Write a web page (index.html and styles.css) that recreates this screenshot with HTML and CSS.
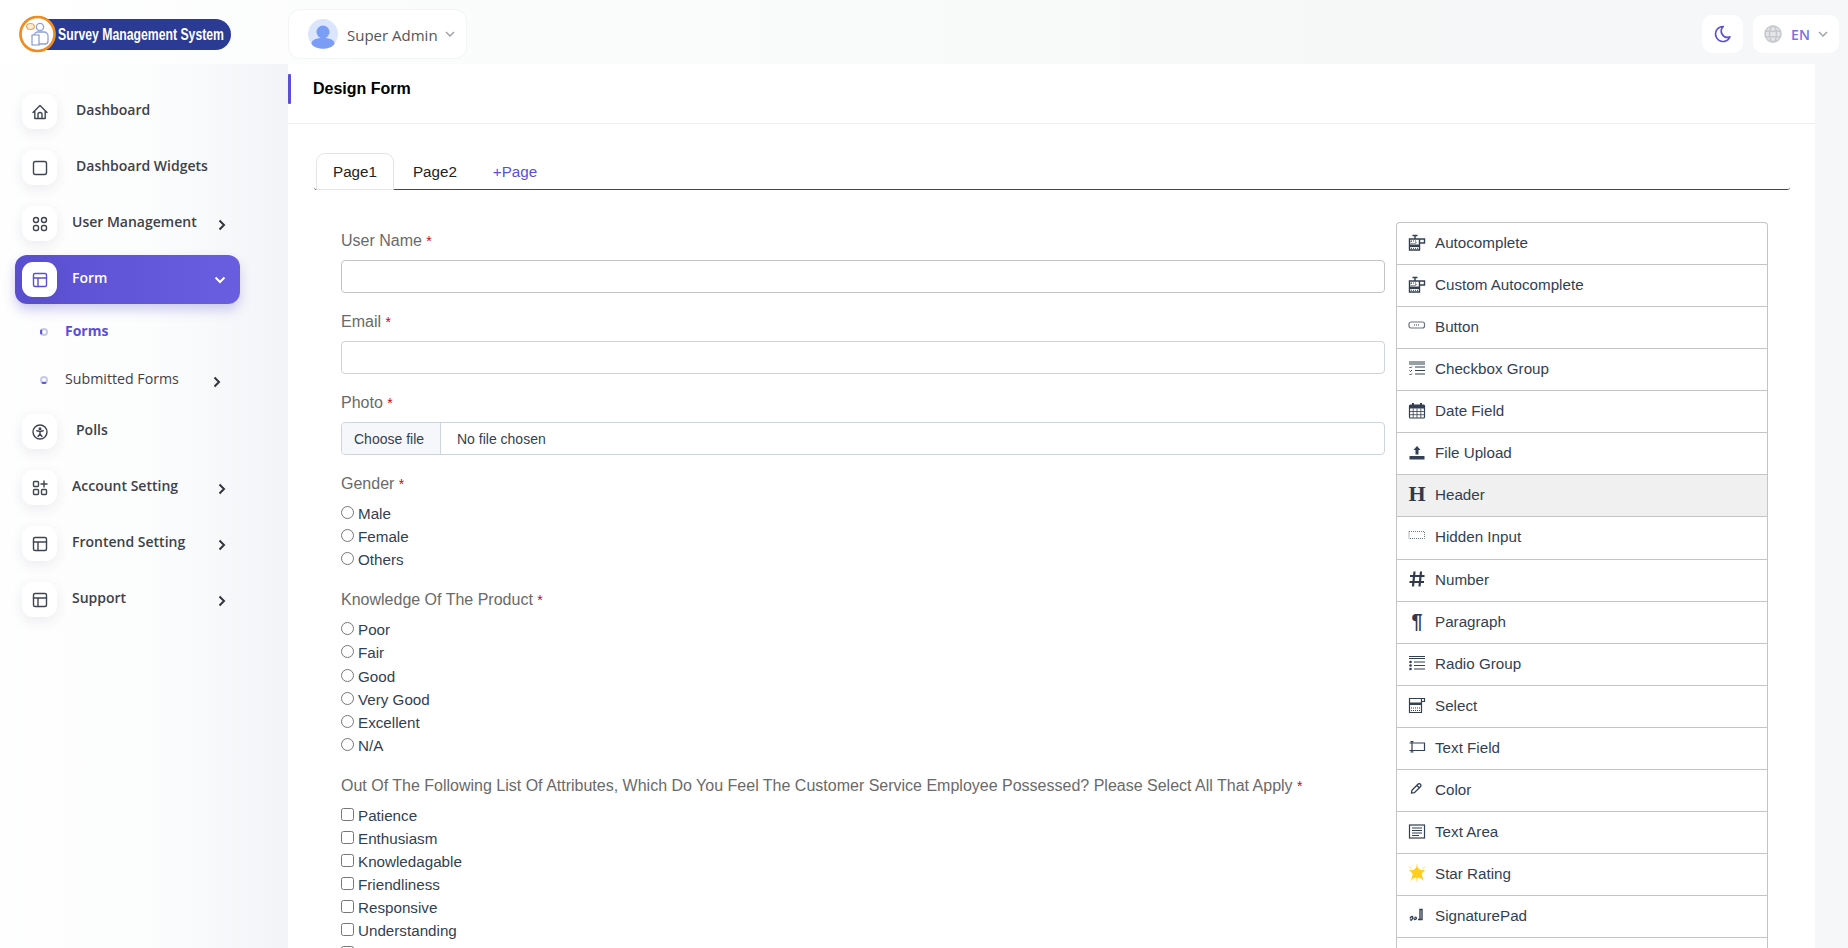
FILE: index.html
```html
<!DOCTYPE html>
<html lang="en">
<head>
    <meta charset="UTF-8">
    <title>Design Form - Survey Management System</title>
    <link rel="stylesheet" href="styles.css">
</head>
<body>

    <!-- Top Bar -->
    <header class="top-bar">
        <div class="logo">
            <svg width="288" height="64" viewBox="0 0 288 64">
                <rect x="30" y="19" width="201" height="31" rx="15.5" fill="#2b3a92"/>
                <circle cx="37.5" cy="34" r="18" fill="#9a9aa5"/>
                <circle cx="37.5" cy="34" r="17" fill="#fff" stroke="#f28c1e" stroke-width="2.6"/>
                <circle cx="40" cy="27" r="3.6" fill="#fff" stroke="#8fa0d8" stroke-width="1.3"/>
                <path d="M34 44V36a4 4 0 0 1 4-4h6a4 4 0 0 1 4 4v5a3 3 0 0 1-3 3z" fill="#fff" stroke="#8fa0d8" stroke-width="1.3"/>
                <path d="M32 35h7v10h-7z" fill="#fff" stroke="#7f8fc8" stroke-width="1.1"/>
                <ellipse cx="30.5" cy="26.5" rx="3.8" ry="3" fill="#fdeed8" stroke="#f2a24a" stroke-width="1.2"/>
                <text x="58" y="39.5" font-family="Liberation Sans Narrow, Liberation Sans" font-weight="700" font-size="17" fill="#fff" textLength="166" lengthAdjust="spacingAndGlyphs">Survey Management System</text>
            </svg>
        </div>
        <div class="user-menu">
            <svg class="avatar" width="30" height="30" viewBox="0 0 30 30">
                <circle cx="15" cy="15" r="15" fill="#dbe5fb"/>
                <circle cx="15" cy="13" r="6.5" fill="#7b9df5"/>
                <ellipse cx="15" cy="24.2" rx="11.500" ry="5.500" fill="#7b9df5"/>
            </svg>
            <span class="user-name">Super Admin</span>
            <svg class="caret" width="10" height="6" viewBox="0 0 10 6"><path d="M1 1l4 4 4-4" fill="none" stroke="#9a9da5" stroke-width="1.3"/></svg>
        </div>
        <div class="top-right">
            <div class="top-btn moon-btn">
                <svg width="20" height="20" viewBox="0 0 24 24"><path d="M12 3c.132 0 .263 0 .393 0a7.500 7.500 0 0 0 7.920 12.446a9 9 0 1 1-8.313-12.454z" fill="none" stroke="#5b4fd6" stroke-width="2" stroke-linejoin="round"/></svg>
            </div>
            <div class="top-btn lang-btn">
                <svg width="18" height="18" viewBox="0 0 18 18" fill="none" stroke="#c6c8cc" stroke-width="1.500">
                    <circle cx="9" cy="9" r="8" fill="#e4e5e8"/>
                    <ellipse cx="9" cy="9" rx="3.500" ry="8"/>
                    <path d="M1.500 6.300h15M1.500 11.700h15"/>
                </svg>
                <span class="lang-code">EN</span>
                <svg class="caret" width="10" height="6" viewBox="0 0 10 6"><path d="M1 1l4 4 4-4" fill="none" stroke="#9a9da5" stroke-width="1.300"/></svg>
            </div>
        </div>
    </header>

    <div class="layout">

        <!-- Sidebar -->
        <aside class="sidebar">
            <nav class="nav">
                <a class="nav-item plain">
                    <span class="nav-icon"><svg width="18" height="18" viewBox="0 0 18 18" class="ico"><path d="M2 9.500L9 2.500l7 7M3.800 8v7.500h10.400V8M7 15.500v-4a2 2 0 0 1 4 0v4"/></svg></span>
                    <span class="nav-label">Dashboard</span>
                </a>
                <a class="nav-item plain">
                    <span class="nav-icon"><svg width="18" height="18" viewBox="0 0 18 18" class="ico"><rect x="2.500" y="2.500" width="13" height="13" rx="2"/></svg></span>
                    <span class="nav-label">Dashboard Widgets</span>
                </a>
                <a class="nav-item">
                    <span class="nav-icon"><svg width="18" height="18" viewBox="0 0 18 18" class="ico"><rect x="2.500" y="2.500" width="5" height="5" rx="2.500"/><rect x="10.500" y="2.500" width="5" height="5" rx="2.500"/><rect x="2.500" y="10.500" width="5" height="5" rx="2"/><rect x="10.500" y="10.500" width="5" height="5" rx="2"/></svg></span>
                    <span class="nav-label">User Management</span>
                    <svg class="chev" width="8" height="12" viewBox="0 0 8 12"><path d="M1.500 1.500L6 6l-4.500 4.500"/></svg>
                </a>
                <a class="nav-item active">
                    <span class="nav-icon"><svg width="18" height="18" viewBox="0 0 18 18" class="ico"><rect x="2.500" y="2.500" width="13" height="13" rx="1.500"/><path d="M2.500 7h13M7 7v8.500"/></svg></span>
                    <span class="nav-label">Form</span>
                    <svg class="chev-down" width="12" height="8" viewBox="0 0 12 8"><path d="M1.500 1.500L6 6l4.500-4.500"/></svg>
                </a>
                <div class="sub-nav">
                    <a class="sub-item current"><span class="bullet"></span><span>Forms</span></a>
                    <a class="sub-item"><span class="bullet bullet-b"></span><span>Submitted Forms</span>
                        <svg class="chev" width="8" height="12" viewBox="0 0 8 12"><path d="M1.500 1.500L6 6l-4.500 4.500"/></svg>
                    </a>
                </div>
                <a class="nav-item plain">
                    <span class="nav-icon"><svg width="18" height="18" viewBox="0 0 18 18" class="ico"><circle cx="9" cy="9" r="7"/><circle cx="9" cy="5.800" r=".8"/><path d="M5.800 7.700L9 8.500l3.200-.8M9 8.500v2.300M9 10.800l-2 2.700M9 10.800l2 2.700"/></svg></span>
                    <span class="nav-label">Polls</span>
                </a>
                <a class="nav-item">
                    <span class="nav-icon"><svg width="18" height="18" viewBox="0 0 18 18" class="ico"><rect x="2.500" y="2.500" width="5" height="5" rx="1"/><rect x="2.500" y="10.500" width="5" height="5" rx="1"/><rect x="10.500" y="10.500" width="5" height="5" rx="1"/><path d="M13 2v6M10 5h6"/></svg></span>
                    <span class="nav-label">Account Setting</span>
                    <svg class="chev" width="8" height="12" viewBox="0 0 8 12"><path d="M1.500 1.500L6 6l-4.500 4.500"/></svg>
                </a>
                <a class="nav-item">
                    <span class="nav-icon"><svg width="18" height="18" viewBox="0 0 18 18" class="ico"><rect x="2.500" y="2.500" width="13" height="13" rx="1.500"/><path d="M2.500 7h13M7 7v8.500"/></svg></span>
                    <span class="nav-label">Frontend Setting</span>
                    <svg class="chev" width="8" height="12" viewBox="0 0 8 12"><path d="M1.500 1.500L6 6l-4.500 4.500"/></svg>
                </a>
                <a class="nav-item">
                    <span class="nav-icon"><svg width="18" height="18" viewBox="0 0 18 18" class="ico"><rect x="2.500" y="2.500" width="13" height="13" rx="1.500"/><path d="M2.500 7h13M7 7v8.500"/></svg></span>
                    <span class="nav-label">Support</span>
                    <svg class="chev" width="8" height="12" viewBox="0 0 8 12"><path d="M1.500 1.500L6 6l-4.500 4.500"/></svg>
                </a>
            </nav>
        </aside>

        <!-- Main Card -->
        <main class="card">
            <div class="card-head">
                <span class="accent"></span>
                <h1 class="card-title">Design Form</h1>
            </div>
            <div class="card-body">
                <div class="tabs">
                    <a class="tab selected">Page1</a>
                    <a class="tab">Page2</a>
                    <a class="tab add">+Page</a>
                </div>

                <div class="builder">
                    <!-- Preview -->
                    <form class="preview">
                        <div class="field">
                            <label class="field-label">User Name <span class="req">*</span></label>
                            <input class="text-input first" type="text">
                        </div>
                        <div class="field">
                            <label class="field-label">Email <span class="req">*</span></label>
                            <input class="text-input" type="text">
                        </div>
                        <div class="field">
                            <label class="field-label">Photo <span class="req">*</span></label>
                            <label class="file-input"><span class="file-btn">Choose file</span><span>No file chosen</span></label>
                        </div>
                        <div class="field options">
                            <label class="field-label">Gender <span class="req">*</span></label>
                            <label class="option"><input type="radio" name="gender">Male</label>
                            <label class="option"><input type="radio" name="gender">Female</label>
                            <label class="option"><input type="radio" name="gender">Others</label>
                        </div>
                        <div class="field options">
                            <label class="field-label">Knowledge Of The Product <span class="req">*</span></label>
                            <label class="option"><input type="radio" name="know">Poor</label>
                            <label class="option"><input type="radio" name="know">Fair</label>
                            <label class="option"><input type="radio" name="know">Good</label>
                            <label class="option"><input type="radio" name="know">Very Good</label>
                            <label class="option"><input type="radio" name="know">Excellent</label>
                            <label class="option"><input type="radio" name="know">N/A</label>
                        </div>
                        <div class="field options">
                            <label class="field-label">Out Of The Following List Of Attributes, Which Do You Feel The Customer Service Employee Possessed? Please Select All That Apply <span class="req">*</span></label>
                            <label class="option"><input type="checkbox">Patience</label>
                            <label class="option"><input type="checkbox">Enthusiasm</label>
                            <label class="option"><input type="checkbox">Knowledagable</label>
                            <label class="option"><input type="checkbox">Friendliness</label>
                            <label class="option"><input type="checkbox">Responsive</label>
                            <label class="option"><input type="checkbox">Understanding</label>
                            <label class="option"><input type="checkbox"></label>
                        </div>
                    </form>

                    <!-- Field Palette -->
                    <ul class="palette">
                        <li><svg class="pal-ico" width="18" height="18" viewBox="0 0 18 18"><path d="M1.500 6h10v11h-10zM11.500 6h5v4h-5M7 2v4M4.500 2.500h5" fill="none" stroke-width="1.400"/><path d="M2 11.500h9v2.500H2z" class="fill"/><path d="M3 8h5v2.500H3zM3 15.300h7" class="dots"/></svg>Autocomplete</li>
                        <li><svg class="pal-ico" width="18" height="18" viewBox="0 0 18 18"><path d="M1.500 6h10v11h-10zM11.500 6h5v4h-5M7 2v4M4.500 2.500h5" fill="none" stroke-width="1.400"/><path d="M2 11.500h9v2.500H2z" class="fill"/><path d="M3 8h5v2.500H3zM3 15.300h7" class="dots"/></svg>Custom Autocomplete</li>
                        <li><svg class="pal-ico" width="18" height="18" viewBox="0 0 18 18"><rect x="1" y="5" width="15.500" height="6" rx="2" fill="none" stroke="#6b7280" stroke-width="1.200"/><path d="M6 8h5" class="dots"/></svg>Button</li>
                        <li><svg class="pal-ico" width="18" height="18" viewBox="0 0 18 18"><path d="M1 3h16M1 5h16M7 8h10M7 11.500h10M7 15h10" fill="none"/><path d="M1.500 8l1 1 1.500-1.500M1.500 11.500l1 1 1.500-1.500M1.500 15l1 1 1.500-1.500" fill="none"/></svg>Checkbox Group</li>
                        <li><svg class="pal-ico" width="18" height="18" viewBox="0 0 18 18"><rect x="1.500" y="4" width="15" height="13" rx="1" fill="none" stroke-width="1.200"/><path d="M1.500 4h15v3.500h-15z" class="fill"/><path d="M5 2v3M13 2v3" stroke-width="2"/><path d="M1.500 10.500h15M1.500 13.700h15M5.200 7.500V17M9 7.500V17M12.800 7.500V17" fill="none" stroke-width=".8"/></svg>Date Field</li>
                        <li><svg class="pal-ico" width="18" height="18" viewBox="0 0 18 18"><path d="M9 3l3.500 4h-2v4.500h-3V7h-2z" class="fill"/><path d="M1.500 13h15v3.500h-15z" class="fill"/></svg>File Upload</li>
                        <li class="hovered"><span class="glyph glyph-h">H</span>Header</li>
                        <li class="tall"><svg class="pal-ico" width="18" height="18" viewBox="0 0 18 18"><rect x="1" y="5.500" width="15.500" height="7" fill="none" stroke="#6b7280" stroke-width="1" stroke-dasharray="1 1"/></svg>Hidden Input</li>
                        <li><svg class="pal-ico hash" width="18" height="18" viewBox="0 0 18 18"><path d="M6.500 1.500L5 16.500M13 1.500L11.500 16.500M2 6h14.500M1.500 12h14.500" fill="none" stroke-width="2.200"/></svg>Number</li>
                        <li><span class="glyph glyph-par">¶</span>Paragraph</li>
                        <li><svg class="pal-ico" width="18" height="18" viewBox="0 0 18 18"><path d="M1 2.500h16M1 4.500h16M6 8h11M6 11.500h11M6 15h11" fill="none"/><circle cx="2.500" cy="8" r="1.300" class="fill"/><circle cx="2.500" cy="11.500" r="1.300" class="fill"/><circle cx="2.500" cy="15" r="1.300" class="fill"/></svg>Radio Group</li>
                        <li><svg class="pal-ico" width="18" height="18" viewBox="0 0 18 18"><path d="M1.500 2.500h12v14h-12zM13.500 2.500h3v3h-3" fill="none" stroke-width="1.200"/><path d="M1.500 6.500h12v2.500h-12z" class="fill"/><path d="M3 12h9M3 14.500h9" class="dots"/></svg>Select</li>
                        <li><svg class="pal-ico" width="18" height="18" viewBox="0 0 18 18"><path d="M4 5h12.500v7.500H4M1.500 5h2.500v7.500h-2.500M2.500 3.500h3M2.500 14h3M4 3.500V14" fill="none" stroke-width="1.200"/></svg>Text Field</li>
                        <li><svg class="pal-ico" width="18" height="18" viewBox="0 0 18 18"><path d="M3.500 13l.4-2.800 6-6a1.700 1.700 0 0 1 2.500 2.500l-6 6zM9 5.500l2.500 2.500" fill="none" stroke-width="1.300"/></svg>Color</li>
                        <li><svg class="pal-ico" width="18" height="18" viewBox="0 0 18 18"><rect x="1.500" y="3" width="15" height="13" fill="none" stroke-width="1.200"/><path d="M4 6h10M4 8.500h10M4 11h10M4 13.500h7" fill="none"/></svg>Text Area</li>
                        <li><svg width="18" height="18" viewBox="0 0 18 18" class="star-ico"><path d="M9 2l2.600 4.300 5.400-.3-3.500 4 1.900 5.200L9.500 13.500 9 16l-1-2.500-4.900 1.700L5 10 1 6l5.400.3z" fill="#ffcd1c"/><circle cx="9" cy="9" r="4.600" fill="#ffcd1c"/><path d="M9 0v3M1 2.500l2.500 2.500M17 2.500L14.500 5M9 15v3M2.500 16.500l2-2M15.500 16.500l-2-2" stroke="#ffdb5c" stroke-width=".9"/></svg>Star Rating</li>
                        <li><svg class="pal-ico" width="18" height="18" viewBox="0 0 18 18"><path d="M2 12.500c1-3 3.500-2.500 2.500 0s-2 1.800-2 .8M6.500 11.500c1.500-1 2.500.5 1.500 1.500s-2.500.3-1.500-.8M10 13.500h4.500M12 3.500h2v10h-2z" fill="none" stroke-width="1.400"/></svg>SignaturePad</li>
                        <li></li>
                    </ul>
                </div>
            </div>
        </main>
    </div>

</body>
</html>
```
FILE: styles.css
```css
/* Global Styles */
html, body {
    height: 100%;
}

body {
    margin: 0;
    overflow: hidden;
    font-family: 'Liberation Sans', Arial, sans-serif;
    background: linear-gradient(90deg, #ffffff 0%, #fbfcfc 20%, #f6f8f8 75%, #f5f7f8 100%);
    color: #333f52;
}

a {
    text-decoration: none;
    color: inherit;
}

/* Top Bar */
.top-bar {
    display: flex;
    align-items: center;
    height: 64px;
}

.logo {
    width: 288px;
    height: 64px;
    flex-shrink: 0;
}

.logo svg {
    display: block;
}

.user-menu {
    display: flex;
    align-items: center;
    box-sizing: border-box;
    width: 179px;
    height: 50px;
    margin-top: 4px;
    padding-left: 19px;
    background: #fff;
    border: 1px solid #f3f4f6;
    border-radius: 12px;
}

.user-name {
    margin-left: 9px;
    margin-top: 1px;
    font-family: 'Open Sans', sans-serif;
    font-size: 15px;
    color: #555;
}

.user-menu .caret {
    margin-left: 7px;
}

.top-right {
    display: flex;
    gap: 10px;
    margin-left: auto;
    margin-right: 9px;
    margin-top: 4px;
}

.top-btn {
    display: flex;
    align-items: center;
    justify-content: center;
    height: 38px;
    background: #fff;
    border-radius: 10px;
}

.moon-btn {
    width: 41px;
}

.lang-btn {
    width: 86px;
}

.lang-code {
    margin: 0 8px 0 9px;
    font-family: 'Open Sans', sans-serif;
    font-size: 14px;
    font-weight: 600;
    color: #7c72e0;
}

/* Layout */
.layout {
    display: flex;
    height: calc(100% - 64px);
}

/* Sidebar */
.sidebar {
    width: 288px;
    flex-shrink: 0;
    box-sizing: border-box;
    padding: 30px 0 0 22px;
    background: linear-gradient(90deg, #fefefe 0%, #fcfdfd 50%, #f3f4f8 100%);
    font-family: 'Open Sans', sans-serif;
    font-size: 14px;
    font-weight: 600;
    color: #3f4149;
}

.nav {
    display: flex;
    flex-direction: column;
    gap: 21px;
}

.nav-item {
    display: flex;
    align-items: center;
    box-sizing: border-box;
    width: 218px;
    padding-right: 14px;
}

.nav-icon {
    display: flex;
    align-items: center;
    justify-content: center;
    width: 35px;
    height: 35px;
    flex-shrink: 0;
    background: #fff;
    border-radius: 11px;
    box-shadow: 0 4px 14px rgba(60, 60, 90, 0.09);
}

.ico {
    fill: none;
    stroke: #3f4452;
    stroke-width: 1.4;
    stroke-linecap: round;
    stroke-linejoin: round;
}

.nav-label {
    margin-left: 15px;
    margin-bottom: 5px;
}

.plain .nav-label {
    margin-left: 19px;
}

.chev, .chev-down {
    margin-left: auto;
    fill: none;
    stroke: #33353c;
    stroke-width: 2;
}

.nav-item .chev {
    margin-top: 3px;
}

.nav-item.active {
    width: 225px;
    margin: -7px 0 -7px -7px;
    padding: 7px 14px 7px 7px;
    border-radius: 12px;
    background: linear-gradient(90deg, #5a4fd0, #6a5ee0);
    box-shadow: 0 6px 12px rgba(90, 80, 210, 0.28);
    color: #fff;
}

.active .ico {
    stroke: #5a4fd6;
}

.active .chev-down {
    stroke: #fff;
    margin-top: 1px;
}

.sub-nav {
    display: flex;
    flex-direction: column;
    margin: -10px 0 -11px 18px;
}

.sub-item {
    display: flex;
    align-items: center;
    width: 181px;
    height: 48px;
    font-size: 14.2px;
    font-weight: 500;
}

.sub-item .chev {
    margin-top: 3px;
}

.sub-item.current {
    color: #5b4fd6;
    font-size: 14px;
    font-weight: 700;
}

.sub-item > span:nth-child(2) {
    margin-bottom: 3px;
}

.bullet {
    box-sizing: border-box;
    width: 8px;
    height: 8px;
    margin-right: 17px;
    border: 2px solid #c6cae6;
    border-left-color: #5b4fd6;
    border-radius: 50%;
}

.bullet-b {
    border-left-color: #c6cae6;
    border-bottom-color: #5b4fd6;
}

/* Main Card */
.card {
    flex: 1;
    margin-right: 33px;
    background: #fff;
    min-width: 0;
}

.card-head {
    display: flex;
    box-sizing: border-box;
    height: 60px;
    padding-top: 10px;
    border-bottom: 1px solid #eeeff1;
}

.accent {
    width: 3px;
    height: 30px;
    background: #5b4fd6;
    border-radius: 1px;
}

.card-title {
    margin: 0 0 0 22px;
    font-size: 16px;
    line-height: 30px;
    font-weight: 700;
    color: #000;
}

.card-body {
    padding: 29px 25px 0 26px;
}

/* Tabs */
.tabs {
    display: flex;
    box-sizing: border-box;
    height: 37px;
    padding-left: 2px;
    border-bottom: 1px solid #44464f;
    border-radius: 0 0 3px 3px;
    font-size: 15.2px;
}

.tab {
    box-sizing: border-box;
    height: 37px;
    padding: 0 16px;
    margin-right: 2px;
    line-height: 35px;
    color: #222;
    border: 1px solid transparent;
}

.tab.selected {
    background: #fff;
    border-color: #e4e5e8;
    border-radius: 9px 9px 0 0;
}

.tab.add {
    color: #5b4fd6;
}

/* Form Builder */
.builder {
    display: flex;
    gap: 11px;
    margin-top: 32px;
    padding-left: 27px;
}

.preview {
    width: 1044px;
    flex-shrink: 0;
}

.field {
    margin-bottom: 20px;
}

.field-label {
    display: block;
    height: 18px;
    margin: 10px 0 10px;
    font-size: 16px;
    line-height: 18px;
    color: #6a6a6a;
}

.options .field-label {
    margin-bottom: 9px;
}

.req {
    font-size: 14px;
    color: #d0021b;
}

.text-input {
    display: block;
    box-sizing: border-box;
    width: 100%;
    height: 33px;
    padding: 0 12px;
    background: #fff;
    border: 1px solid #ced4da;
    border-radius: 4px;
}

.text-input.first {
    border-color: #c4c4c4;
}

.file-input {
    display: flex;
    align-items: center;
    box-sizing: border-box;
    width: 100%;
    height: 33px;
    background: #fff;
    border: 1px solid #ced4da;
    border-radius: 4px;
    overflow: hidden;
    font-size: 14px;
    color: #333f52;
}

.file-btn {
    display: flex;
    align-items: center;
    box-sizing: border-box;
    width: 99px;
    height: 100%;
    margin-right: 16px;
    padding-left: 12px;
    background: #f5f7fb;
    border-right: 1px solid #ced4da;
}

.option {
    display: flex;
    align-items: center;
    height: 23.1px;
    font-size: 15.2px;
    color: #333f52;
}

.option input {
    width: 13px;
    height: 13px;
    margin: 0 4px 2px 0;
}

/* Field Palette */
.palette {
    list-style: none;
    box-sizing: border-box;
    width: 372px;
    margin: 0;
    padding: 0;
    flex-shrink: 0;
    font-size: 15.2px;
    color: #333f52;
    border: 1px solid #c4c4c4;
    border-bottom: 0;
    border-radius: 4px 4px 0 0;
}

.palette li {
    display: flex;
    align-items: center;
    box-sizing: border-box;
    height: 42px;
    padding: 0 0 2px 11px;
    border-bottom: 1px solid #c4c4c4;
}

.palette li.tall {
    height: 43px;
    padding-bottom: 4px;
}

.palette li.hovered {
    background: #f0f0f0;
}

.pal-ico, .star-ico {
    flex-shrink: 0;
    margin-right: 9px;
    margin-bottom: 2px;
}

.pal-ico {
    fill: #333f52;
    stroke: #333f52;
    stroke-width: 1;
}

.pal-ico.hash {
    stroke: #2f3a4c;
}

.pal-ico .fill {
    fill: #333f52;
    stroke: none;
}

.pal-ico .dots {
    fill: none;
    stroke-width: 1;
    stroke-dasharray: 1 1;
}

.glyph {
    width: 18px;
    margin-right: 9px;
    margin-bottom: 1px;
    text-align: center;
    color: #2f3a4c;
}

.glyph-h {
    font-family: 'Liberation Serif', serif;
    font-size: 22px;
    font-weight: 700;
}

.glyph-par {
    font-size: 20px;
    font-weight: 700;
}
```
